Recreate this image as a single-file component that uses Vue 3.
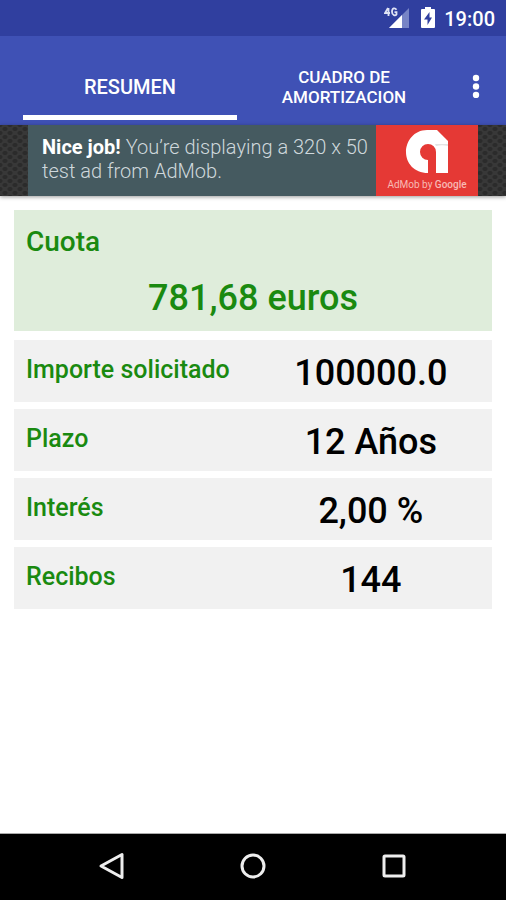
<template>
  <div class="screen">
    <header class="status-bar">
      <svg class="signal" viewBox="0 0 26 24" role="img" aria-label="4G">
        <path d="M25 2v20H5z" fill="#7784c6" />
        <path d="M18 9v13H5z" fill="#fff" />
        <path d="M4 2L1 7h5M4.500 2v8" fill="none" stroke="#dfe3f5" stroke-width="1.800" />
        <path d="M12.500 3.800C11 1.500 8 1.800 8 5.800S11.500 10 12.500 8.500V6.200H10.500" fill="none" stroke="#dfe3f5" stroke-width="1.800" />
      </svg>
      <svg class="battery" viewBox="0 0 14 22" role="img" aria-label="Cargando">
        <path d="M4 0h6v2h3a1 1 0 0 1 1 1v17a1 1 0 0 1-1 1H1a1 1 0 0 1-1-1V3a1 1 0 0 1 1-1h3z" fill="#fff" />
        <path d="M8.500 5L3 12.500h3.500V18L11 10.500H8.500z" fill="#303f9f" />
      </svg>
      <time class="clock">19:00</time>
    </header>

    <div class="app-bar">
      <nav class="tabs">
        <button
          v-for="tab in tabs"
          :key="tab.name"
          type="button"
          class="tab"
          :class="{ active: tab.name === activeTab, long: tab.long }"
          @click="activeTab = tab.name"
        >
          {{ tab.name }}
        </button>
      </nav>
      <button type="button" class="menu-button" aria-label="Más opciones">
        <svg viewBox="0 0 8 24">
          <circle cx="4" cy="4" r="3.200" />
          <circle cx="4" cy="12.500" r="3.200" />
          <circle cx="4" cy="21" r="3.200" />
        </svg>
      </button>
    </div>

    <div class="ad-strip">
      <a href="#" class="ad">
        <span class="ad-text">
          <b>Nice job!</b> <span>You’re displaying a 320 x 50</span><br />
          <span>test ad from AdMob.</span>
        </span>
        <span class="ad-brand">
          <svg class="ad-logo" viewBox="0 0 44 44">
            <path d="M23 43C9 43 1 33 1 22S9 0 22 0h10l11 11v32H31V22a8 8 0 1 0-8 8z" fill="#fff" />
            <path d="M31 16c4-1 8-1 12 0v-2H30z" fill="#e4e4e4" />
          </svg>
          <span class="ad-caption">AdMob by <b>Google</b></span>
        </span>
      </a>
    </div>

    <main class="content">
      <section class="fee">
        <h2 class="label">Cuota</h2>
        <p class="value">781,68 euros</p>
      </section>
      <dl class="rows">
        <div v-for="row in rows" :key="row.label" class="row">
          <dt class="label">{{ row.label }}</dt>
          <dd class="value">{{ row.value }}</dd>
        </div>
      </dl>
    </main>

    <footer class="nav-bar">
      <button type="button" class="nav-button" aria-label="Atrás">
        <svg viewBox="0 0 28 28"><path d="M24 2.500v23L3 14z" /></svg>
      </button>
      <button type="button" class="nav-button" aria-label="Inicio">
        <svg viewBox="0 0 28 28"><circle cx="14" cy="14" r="11" /></svg>
      </button>
      <button type="button" class="nav-button" aria-label="Recientes">
        <svg viewBox="0 0 28 28"><rect x="4" y="4" width="20" height="20" rx="1" /></svg>
      </button>
    </footer>
  </div>
</template>

<script setup>
import { ref } from 'vue'

const tabs = [
  { name: 'RESUMEN', long: false },
  { name: 'CUADRO DE AMORTIZACION', long: true }
]
const activeTab = ref('RESUMEN')

const rows = [
  { label: 'Importe solicitado', value: '100000.0' },
  { label: 'Plazo', value: '12 Años' },
  { label: 'Interés', value: '2,00 %' },
  { label: 'Recibos', value: '144' }
]
</script>

<style>
body {
  margin: 0;
}
</style>

<style scoped>
.screen {
  display: flex;
  flex-direction: column;
  min-height: 100vh;
  background: #fff;
  font-family: Roboto, sans-serif;
}

button {
  padding: 0;
  border: 0;
  background: none;
  font: inherit;
  color: inherit;
  cursor: pointer;
}

.status-bar {
  display: flex;
  align-items: center;
  justify-content: flex-end;
  height: 36px;
  padding-right: 11px;
  background: #303f9f;
  color: #fff;
}

.signal {
  width: 26px;
  height: 24px;
  margin-right: 11px;
}

.battery {
  width: 14px;
  height: 22px;
  margin-right: 9px;
}

.clock {
  padding-top: 2px;
  font-size: 20px;
  font-weight: 500;
}

.app-bar {
  display: flex;
  height: 89px;
  padding: 0 5px 0 23px;
  background: #3f51b5;
  color: #fff;
}

.tabs {
  display: flex;
  flex: 1;
}

.tab {
  flex: 1 1 0;
  min-width: 0;
  box-sizing: border-box;
  margin-bottom: 5px;
  padding: 22px 24px 0;
  border-bottom: 5px solid transparent;
  font-size: 20px;
  font-weight: 500;
  line-height: 20px;
}

.tab.long {
  font-size: 17px;
}

.tab.active {
  border-bottom-color: #fff;
}

.menu-button {
  width: 50px;
  padding-top: 14px;
}

.menu-button svg {
  width: 8px;
  height: 24px;
  fill: #fff;
}

.ad-strip {
  display: flex;
  justify-content: center;
  height: 71px;
  background-color: #383838;
  background-image: radial-gradient(#2b2b2b 2px, transparent 3px), radial-gradient(#2b2b2b 2px, transparent 3px);
  background-position: 0 0, 5px 4px;
  background-size: 10px 8px;
  box-shadow: 0 1px 4px rgba(0, 0, 0, 0.4);
}

.ad {
  display: flex;
  width: 450px;
  background: #455a60;
  color: #cfd8dc;
  text-decoration: none;
}

.ad-text {
  flex: 1;
  padding: 10px 0 0 14px;
  font-size: 20px;
  font-weight: 300;
  line-height: 24px;
}

.ad-text b {
  color: #fff;
  font-weight: 700;
}

.ad-brand {
  display: flex;
  flex-direction: column;
  align-items: center;
  width: 102px;
  padding-top: 5px;
  background: #e53935;
}

.ad-logo {
  width: 44px;
  height: 44px;
}

.ad-caption {
  color: #f8b9b4;
  font-size: 10px;
  line-height: 22px;
}

.ad-caption b {
  font-weight: 500;
}

.content {
  flex: 1;
  padding: 14px;
}

.label {
  margin: 0;
  color: #1a8a10;
  font-size: 25px;
  font-weight: 500;
  line-height: 30px;
}

.value {
  margin: 0;
  font-size: 36px;
  font-weight: 500;
  line-height: 42px;
  text-align: center;
}

.fee {
  margin-bottom: 9px;
  padding: 17px 12px 12px;
  background: #dfeddb;
}

.fee .label {
  font-size: 28px;
}

.fee .value {
  margin-top: 20px;
  color: #1a8a10;
}

.rows {
  display: flex;
  flex-direction: column;
  gap: 7px;
  margin: 0;
}

.row {
  display: flex;
  padding-left: 12px;
  background: #f1f1f1;
}

.row .label {
  flex: 1;
  padding: 15px 0 17px;
}

.row .value {
  width: 52%;
  padding-top: 12px;
}

.nav-bar {
  display: flex;
  justify-content: center;
  height: 66px;
  border-top: 1px solid #aaa;
  background: #000;
}

.nav-button {
  width: 141px;
  padding-top: 2px;
}

.nav-button svg {
  width: 28px;
  height: 28px;
  fill: none;
  stroke: #eee;
  stroke-width: 3;
  stroke-linejoin: round;
}
</style>
